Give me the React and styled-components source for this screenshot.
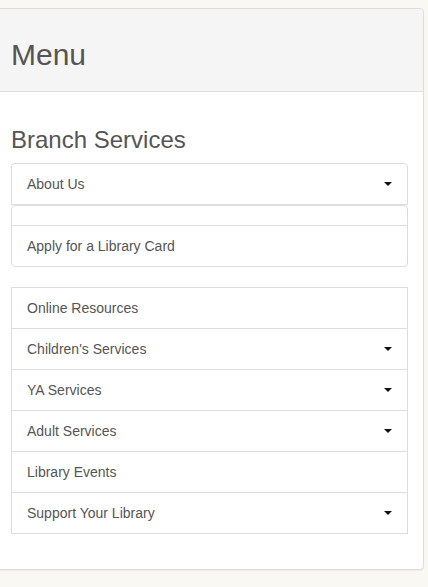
import styled, { createGlobalStyle } from 'styled-components';

const GlobalStyle = createGlobalStyle`
  html, body {
    margin: 0;
    padding: 0;
    background-color: #f9f8f3;
  }
  body {
    font-family: "Liberation Sans", Arial, sans-serif;
    font-size: 14px;
    color: #555;
  }
`;

// Styled components
const Page = styled.div`
  padding: 8px 4px 18px 0;
  overflow: hidden;
`;

const Panel = styled.div`
  margin-left: -5px;
  background-color: white;
  border: 1px solid #ddd;
  border-radius: 4px;
  box-shadow: 0 1px 1px rgba(0, 0, 0, 0.05);
`;

const PanelHeading = styled.div`
  padding: 10px 15px;
  background-color: #f5f5f5;
  border-bottom: 1px solid #ddd;
  border-radius: 3px 3px 0 0;
`;

const Title = styled.h1`
  font-size: 30px;
  font-weight: 400;
  line-height: 32px;
  margin: 20px 0 10px;
  color: #555;
`;

const PanelBody = styled.div`
  padding: 15px;
`;

const SectionTitle = styled.h3`
  font-size: 24px;
  font-weight: 400;
  line-height: 26px;
  margin: 20px 0 10px;
  color: #555;
`;

const ListGroup = styled.div`
  display: flex;
  flex-direction: column;
  margin-bottom: 20px;

  & > div:first-child {
    border-top-left-radius: ${p => (p.$square ? '0' : '4px')};
    border-top-right-radius: ${p => (p.$square ? '0' : '4px')};
  }
  & > div:last-child {
    border-bottom-left-radius: ${p => (p.$square ? '0' : '4px')};
    border-bottom-right-radius: ${p => (p.$square ? '0' : '4px')};
    margin-bottom: 0;
  }
`;

const Item = styled.div`
  display: flex;
  align-items: center;
  justify-content: space-between;
  height: 20px;
  padding: 10px 15px;
  border: 1px solid #ddd;
  margin-bottom: ${p => (p.$open ? '0' : '-1px')};
  line-height: 20px;
  color: #555;
  background-color: white;
`;

const SubList = styled.div`
  height: 19px;
  border: 1px solid #ddd;
  border-radius: 4px 4px 0 0;
  margin-bottom: -1px;
`;

const Caret = styled.span`
  display: inline-block;
  width: 0;
  height: 0;
  border-top: 4px solid #111;
  border-left: 4px solid transparent;
  border-right: 4px solid transparent;
`;

const branch = [
  { label: 'About Us', dropdown: true, open: true },
  { label: 'Apply for a Library Card' },
];

const services = [
  { label: 'Online Resources' },
  { label: "Children's Services", dropdown: true },
  { label: 'YA Services', dropdown: true },
  { label: 'Adult Services', dropdown: true },
  { label: 'Library Events' },
  { label: 'Support Your Library', dropdown: true },
];

const MenuItem = ({ label, dropdown, open }) => (
  <Item $open={open}>
    <span>{label}</span>
    {dropdown && <Caret />}
  </Item>
);

const App = () => {
  return (
    <Page>
      <GlobalStyle />
      <Panel>
        <PanelHeading>
          <Title>Menu</Title>
        </PanelHeading>
        <PanelBody>
          <SectionTitle>Branch Services</SectionTitle>
          <ListGroup>
            <MenuItem {...branch[0]} />
            <SubList />
            <MenuItem {...branch[1]} />
          </ListGroup>
          <ListGroup $square>
            {services.map(s => (
              <MenuItem key={s.label} {...s} />
            ))}
          </ListGroup>
        </PanelBody>
      </Panel>
    </Page>
  );
};

export default App;
